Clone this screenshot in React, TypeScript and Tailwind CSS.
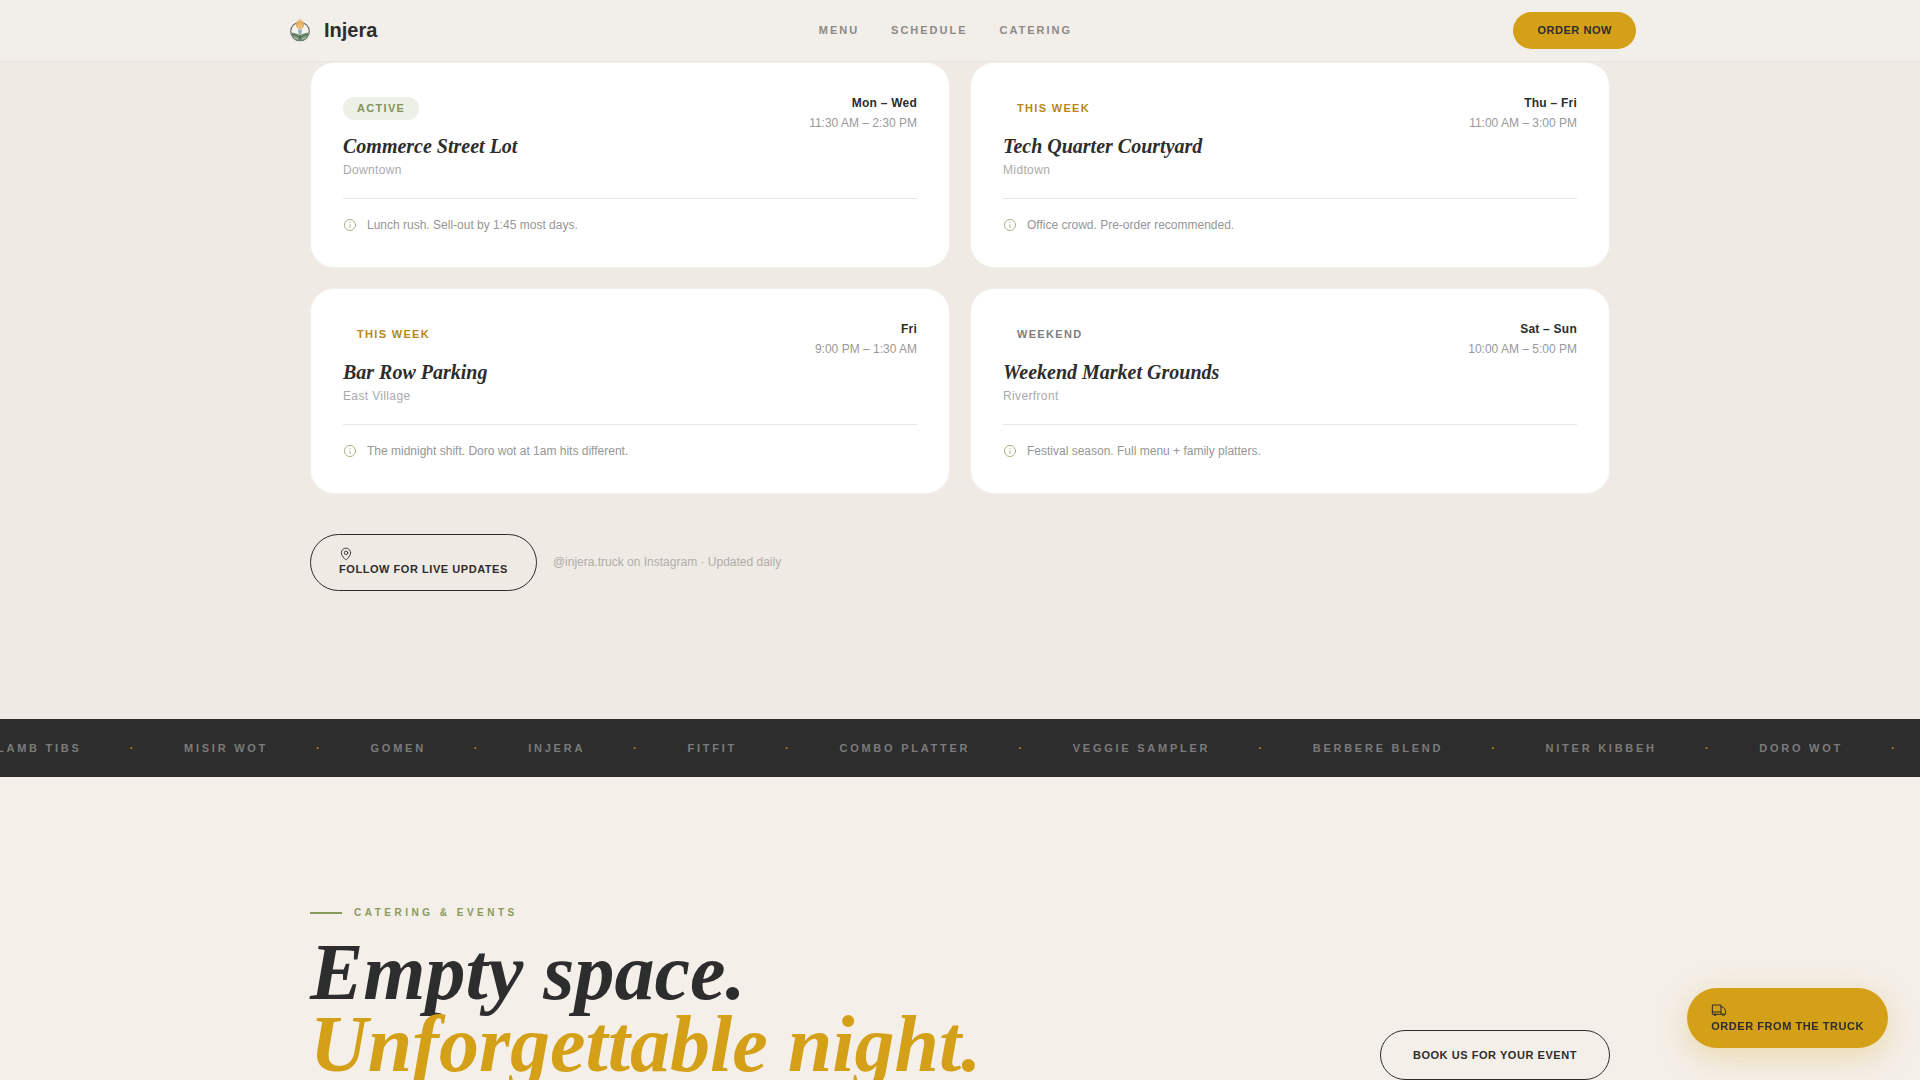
import React from "react"
import { MapPin } from "lucide-react"

type Stop = {
  status: string
  badge: string
  name: string
  area: string
  days: string
  hours: string
  note: string
}

const stops: Stop[] = [
  {
    status: "Active",
    badge: "bg-[#edf0e6] text-[#83945a]",
    name: "Commerce Street Lot",
    area: "Downtown",
    days: "Mon – Wed",
    hours: "11:30 AM – 2:30 PM",
    note: "Lunch rush. Sell-out by 1:45 most days.",
  },
  {
    status: "This Week",
    badge: "text-[#b8881a]",
    name: "Tech Quarter Courtyard",
    area: "Midtown",
    days: "Thu – Fri",
    hours: "11:00 AM – 3:00 PM",
    note: "Office crowd. Pre-order recommended.",
  },
  {
    status: "This Week",
    badge: "text-[#b8881a]",
    name: "Bar Row Parking",
    area: "East Village",
    days: "Fri",
    hours: "9:00 PM – 1:30 AM",
    note: "The midnight shift. Doro wot at 1am hits different.",
  },
  {
    status: "Weekend",
    badge: "text-[#808080]",
    name: "Weekend Market Grounds",
    area: "Riverfront",
    days: "Sat – Sun",
    hours: "10:00 AM – 5:00 PM",
    note: "Festival season. Full menu + family platters.",
  },
]

const dishes = [
  "Lamb Tibs",
  "Misir Wot",
  "Gomen",
  "Injera",
  "Fitfit",
  "Combo Platter",
  "Veggie Sampler",
  "Berbere Blend",
  "Niter Kibbeh",
  "Doro Wot",
]

function Logo() {
  return (
    <svg className="h-8 w-8" viewBox="0 0 32 32" fill="none" aria-hidden="true">
      <circle cx="16" cy="16.500" r="9.300" fill="#f5f3ee" stroke="#5f6668" strokeWidth="1.1" />
      <path d="M7 17.500c3 0 6 .8 9 2.800 3-2 6-2.800 9-2.800-.3 5-4.200 8.300-9 8.300s-8.700-3.300-9-8.300z" fill="#789474" />
      <path d="M8.500 19.500c3 .2 5.500 1.500 7.500 3.500 2-2 4.500-3.300 7.500-3.500M16 16v9.500" stroke="#465c55" strokeWidth="0.9" />
      <path d="M10 22.500l4 1.500m8-1.500l-4 1.500" stroke="#c3d3b8" strokeWidth="0.8" />
      <path d="M16 2.500l.9 4 1.400-2 .2 3.500 1.400-1.500c.7 2.500.3 4.800-.8 6.200-.7.900-1.700 1.400-3.100 1.400s-2.400-.5-3.100-1.400c-1.100-1.400-1.500-3.700-.8-6.200l1.400 1.500.2-3.500 1.400 2z" fill="#e2ac5c" />
      <path d="M16 7.500v6M14 9.500l.6 3.500M18 9.500l-.6 3.500" stroke="#f3dcae" strokeWidth="0.7" />
      <path d="M14 14.500h4l-.5 4h-3z" fill="#8faebb" />
    </svg>
  )
}

function InfoIcon() {
  return (
    <svg className="h-3.5 w-3.5 shrink-0 text-[#a3a67c]" viewBox="0 0 24 24" fill="none" stroke="currentColor" strokeWidth="1.5" strokeLinecap="round" aria-hidden="true">
      <circle cx="12" cy="12" r="9.5" />
      <path d="M12 11.500v5M12 7.500v.6" />
    </svg>
  )
}

function TruckIcon() {
  return (
    <svg className="h-4 w-4" viewBox="0 0 24 24" fill="none" stroke="currentColor" strokeWidth="1.5" strokeLinecap="round" strokeLinejoin="round" aria-hidden="true">
      <path d="M4 18.500h-2v-14h13v14H8" />
      <path d="M2 15h13" />
      <path d="M15 7.500h2c3 .8 5 4 5 7.500v3.500h-1.500M15 18.500h1.500" />
      <circle cx="6" cy="19" r="1.500" />
      <circle cx="18.500" cy="19" r="1.500" />
    </svg>
  )
}

function StopCard({ stop }: { stop: Stop }) {
  return (
    <article className="rounded-3xl border border-[#f3f0ec] bg-white p-8">
      <div className="mb-[18px] flex items-start justify-between">
        <div>
          <span className={`mt-0.5 mb-3 block w-fit rounded-full px-3.5 py-1 text-[11px] leading-[15px] font-bold tracking-[0.12em] uppercase ${stop.badge}`}>
            {stop.status}
          </span>
          <h3 className="font-['Liberation_Serif',serif] text-xl leading-7 font-bold italic">{stop.name}</h3>
          <p className="text-xs leading-5 tracking-[0.03em] text-[#aaaaaa]">{stop.area}</p>
        </div>
        <div className="text-right text-xs">
          <p className="font-bold tracking-[0.02em]">{stop.days}</p>
          <p className="mt-1 text-[#999999]">{stop.hours}</p>
        </div>
      </div>
      <div className="flex items-center gap-2.5 border-t border-[#e8e7e5] pt-4 text-xs leading-5 text-[#969696]">
        <InfoIcon />
        <p>{stop.note}</p>
      </div>
    </article>
  )
}

export default function App() {
  return (
    <div className="min-h-screen overflow-hidden bg-[#f4efe9] font-['Liberation_Sans',sans-serif] text-[#2d2d2d]">
      <header className="border-b border-[#e8e4df] bg-[#f2eee9]">
        <div className="mx-auto flex max-w-[1400px] items-center justify-between px-6 py-3">
          <a href="#" className="flex items-center gap-2 text-xl leading-[29px] font-bold">
            <Logo />
            Injera
          </a>
          <nav className="flex gap-8 text-[11px] leading-[17px] font-bold tracking-[0.18em] text-[#8d8a86] uppercase">
            <a href="#menu">Menu</a>
            <a href="#schedule">Schedule</a>
            <a href="#catering">Catering</a>
          </nav>
          <button className="rounded-full bg-[#d4a017] px-6 py-2.5 text-[11px] leading-[17px] font-bold tracking-[0.05em] uppercase">
            Order Now
          </button>
        </div>
      </header>

      <main>
        <section id="schedule" className="bg-[#efeae4] pb-32">
          <div className="mx-auto max-w-[1300px]">
            <div className="grid grid-cols-2 gap-5">
              {stops.map((stop) => (
                <StopCard key={stop.name} stop={stop} />
              ))}
            </div>
            <div className="mt-10 flex items-center gap-4">
              <button className="rounded-full border border-[#2d2d2d] px-7 py-3 text-left text-[11px] leading-[17px] font-bold tracking-[0.05em] uppercase">
                <MapPin size={14} strokeWidth={1.5} className="block" />
                Follow for live updates
              </button>
              <p className="text-xs leading-[17px] text-[#b0aeaa]">@injera.truck on Instagram · Updated daily</p>
            </div>
          </div>
        </section>

        <div className="overflow-hidden bg-[#2d2d2d] py-5">
          <div className="-ml-[3px] flex w-max text-[11px] leading-[18px] font-bold tracking-[0.25em] whitespace-nowrap text-[#7b7b7b] uppercase">
            {dishes.map((dish) => (
              <span key={dish} className="flex">
                {dish}
                <span className="mx-12 text-[#b8921f]">·</span>
              </span>
            ))}
          </div>
        </div>

        <section id="catering" className="pt-32">
          <div className="mx-auto flex max-w-[1300px] items-end justify-between">
            <div>
              <p className="mb-4 flex items-center gap-3 text-[10px] leading-[15px] font-bold tracking-[0.35em] text-[#8b9a5b] uppercase">
                <span className="h-0.5 w-8 bg-[#8b9a5b]" />
                Catering &amp; Events
              </p>
              <h2 className="font-['Liberation_Serif',serif] text-[80px] leading-[72px] font-bold italic">
                Empty space.
                <span className="block text-[#d4a017]">Unforgettable night.</span>
              </h2>
            </div>
            <button className="rounded-full border border-[#2d2d2d] px-8 py-4 text-[11px] leading-4 font-bold tracking-[0.05em] uppercase">
              Book us for your event
            </button>
          </div>
        </section>
      </main>

      <button className="fixed right-8 bottom-8 rounded-full bg-[#d4a017] px-6 py-3.5 text-left text-[11px] leading-4 font-bold tracking-[0.05em] uppercase shadow-[0_8px_32px_rgba(212,160,23,0.3)]">
        <TruckIcon />
        Order from the truck
      </button>
    </div>
  )
}
